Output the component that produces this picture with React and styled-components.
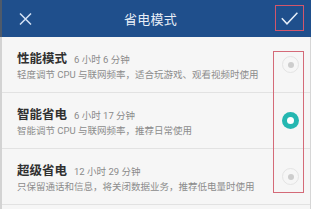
import React from "react";
import styled, { createGlobalStyle } from "styled-components";

const GlobalStyle = createGlobalStyle`
  html, body {
    margin: 0;
    padding: 0;
    background: #ffffff;
  }
  body {
    font-family: Roboto, "Noto Sans CJK SC", sans-serif;
  }
`;

const Frame = styled.div`
  position: relative;
  width: 311px;
  height: 209px;
  display: flex;
  flex-direction: column;
  overflow: hidden;
`;

const Header = styled.div`
  height: 37px;
  flex: none;
  display: flex;
  align-items: center;
  background: #1f4f8c;
  border-left: 2px solid #4e5a6a;
  box-sizing: border-box;
  padding: 0 7px 0 16px;
`;

const IconButton = styled.button`
  flex: none;
  display: flex;
  align-items: center;
  justify-content: center;
  padding: 0;
  background: transparent;
  border: ${(p) => (p.$marked ? "1.5px solid #d2566b" : "none")};
  width: ${(p) => (p.$marked ? "29px" : "14px")};
  height: ${(p) => (p.$marked ? "26px" : "14px")};
  margin-top: ${(p) => (p.$marked ? "-1px" : "0")};
  box-sizing: border-box;
`;

const Title = styled.div`
  flex: 1;
  text-align: center;
  color: #e8eef7;
  font-size: 13px;
  letter-spacing: 0.3px;
  margin-left: -6px;
  font-family: "Noto Sans CJK SC", sans-serif;
`;

const Body = styled.div`
  flex: 1;
  background: #f6f6f6;
  border-left: 2px solid #d3d3d3;
  border-right: 1px solid #d6d6d6;
  display: flex;
  flex-direction: column;
`;

const Row = styled.div`
  height: 56px;
  box-sizing: border-box;
  border-bottom: 1px solid #e2e2e2;
  display: flex;
  align-items: center;
  padding: 0 11px 0 15px;
`;

const Texts = styled.div`
  flex: 1;
  display: flex;
  flex-direction: column;
  margin-top: 1px;
`;

const Heading = styled.div`
  display: flex;
  align-items: baseline;
  height: 17px;
  line-height: 17px;
`;

const Name = styled.span`
  font-family: "Noto Sans CJK SC", sans-serif;
  font-weight: 700;
  font-size: 12.5px;
  color: #303030;
`;

const Time = styled.span`
  margin-left: 7px;
  font-size: 9.5px;
  color: #8a8a8a;
  font-family: Roboto, "Noto Sans CJK SC", sans-serif;
`;

const Desc = styled.div`
  margin-top: 2px;
  font-size: 9.5px;
  line-height: 14px;
  color: #8c8c8c;
  white-space: nowrap;
  font-family: Roboto, "Noto Sans CJK SC", sans-serif;
`;

const Radio = styled.div`
  flex: none;
  width: 17px;
  height: 17px;
  border-radius: 50%;
  box-sizing: border-box;
  display: flex;
  align-items: center;
  justify-content: center;
  background: ${(p) => (p.$on ? "#25b7b1" : "transparent")};
  border: ${(p) => (p.$on ? "none" : "1.5px solid #e4e4e4")};

  &::after {
    content: "";
    width: ${(p) => (p.$on ? "7px" : "6px")};
    height: ${(p) => (p.$on ? "7px" : "6px")};
    border-radius: 50%;
    background: ${(p) => (p.$on ? "#ffffff" : "#cdcdcd")};
  }
`;

const Marker = styled.div`
  position: absolute;
  left: 273px;
  top: 51px;
  width: 31px;
  height: 142px;
  box-sizing: border-box;
  border: 1.5px solid #d46a78;
  pointer-events: none;
`;

const modes = [
  { name: "性能模式", time: "6 小时 6 分钟", desc: "轻度调节 CPU 与联网频率，适合玩游戏、观看视频时使用", on: false },
  { name: "智能省电", time: "6 小时 17 分钟", desc: "智能调节 CPU 与联网频率，推荐日常使用", on: true },
  { name: "超级省电", time: "12 小时 29 分钟", desc: "只保留通话和信息，将关闭数据业务，推荐低电量时使用", on: false },
];

export default function App() {
  return (
    <>
      <GlobalStyle />
      <Frame>
        <Header>
          <IconButton aria-label="close">
            <svg width="13" height="12" viewBox="0 0 13 12">
              <path d="M1 0.5 L12 11.5 M12 0.5 L1 11.5" stroke="#d3e2f5" strokeWidth="1.5" fill="none" />
            </svg>
          </IconButton>
          <Title>省电模式</Title>
          <IconButton $marked aria-label="confirm">
            <svg width="17" height="13" viewBox="0 0 17 13">
              <path d="M0.8 6.2 L6 11.8 L16.4 0.8" stroke="#e6eef8" strokeWidth="1.5" fill="none" />
            </svg>
          </IconButton>
        </Header>
        <Body>
          {modes.map((m) => (
            <Row key={m.name}>
              <Texts>
                <Heading>
                  <Name>{m.name}</Name>
                  <Time>{m.time}</Time>
                </Heading>
                <Desc>{m.desc}</Desc>
              </Texts>
              <Radio $on={m.on} />
            </Row>
          ))}
        </Body>
        <Marker />
      </Frame>
    </>
  );
}
